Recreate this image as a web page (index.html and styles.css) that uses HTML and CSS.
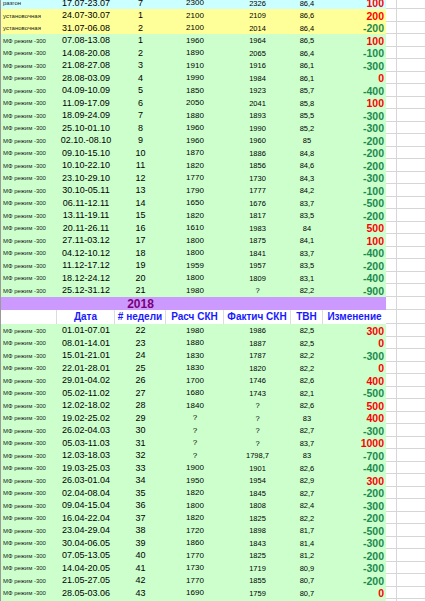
FILE: index.html
```html
<!DOCTYPE html>
<html lang="ru">
<head>
<meta charset="utf-8">
<link rel="stylesheet" href="styles.css">
</head>
<body>
<div class="sheet">
  <div class="row cyan"><div class="c lab">разгон</div><div class="c date">17.07-23.07</div><div class="c wk">7</div><div class="c calc">2300</div><div class="c fact">2326</div><div class="c tvn">86,4</div><div class="c chg up">100</div><div class="x"></div><div class="x last"></div></div>
  <div class="row yellow"><div class="c lab">установочная</div><div class="c date">24.07-30.07</div><div class="c wk">1</div><div class="c calc">2100</div><div class="c fact">2109</div><div class="c tvn">86,6</div><div class="c chg up">200</div><div class="x"></div><div class="x last"></div></div>
  <div class="row yellow"><div class="c lab">установочная</div><div class="c date">31.07-06.08</div><div class="c wk">2</div><div class="c calc">2100</div><div class="c fact">2014</div><div class="c tvn">86,4</div><div class="c chg dn">-200</div><div class="x"></div><div class="x last"></div></div>
  <div class="row green"><div class="c lab">МФ режим -300</div><div class="c date">07.08-13.08</div><div class="c wk">1</div><div class="c calc">1960</div><div class="c fact">1964</div><div class="c tvn">86,5</div><div class="c chg up">100</div><div class="x"></div><div class="x last"></div></div>
  <div class="row green"><div class="c lab">МФ режим -300</div><div class="c date">14.08-20.08</div><div class="c wk">2</div><div class="c calc">1890</div><div class="c fact">2065</div><div class="c tvn">86,4</div><div class="c chg dn">-100</div><div class="x"></div><div class="x last"></div></div>
  <div class="row green"><div class="c lab">МФ режим -300</div><div class="c date">21.08-27.08</div><div class="c wk">3</div><div class="c calc">1910</div><div class="c fact">1916</div><div class="c tvn">86,1</div><div class="c chg dn">-300</div><div class="x"></div><div class="x last"></div></div>
  <div class="row green"><div class="c lab">МФ режим -300</div><div class="c date">28.08-03.09</div><div class="c wk">4</div><div class="c calc">1990</div><div class="c fact">1984</div><div class="c tvn">86,1</div><div class="c chg up">0</div><div class="x"></div><div class="x last"></div></div>
  <div class="row green"><div class="c lab">МФ режим -300</div><div class="c date">04.09-10.09</div><div class="c wk">5</div><div class="c calc">1850</div><div class="c fact">1923</div><div class="c tvn">85,7</div><div class="c chg dn">-400</div><div class="x"></div><div class="x last"></div></div>
  <div class="row green"><div class="c lab">МФ режим -300</div><div class="c date">11.09-17.09</div><div class="c wk">6</div><div class="c calc">2050</div><div class="c fact">2041</div><div class="c tvn">85,8</div><div class="c chg up">100</div><div class="x"></div><div class="x last"></div></div>
  <div class="row green"><div class="c lab">МФ режим -300</div><div class="c date">18.09-24.09</div><div class="c wk">7</div><div class="c calc">1880</div><div class="c fact">1893</div><div class="c tvn">85,5</div><div class="c chg dn">-300</div><div class="x"></div><div class="x last"></div></div>
  <div class="row green"><div class="c lab">МФ режим -300</div><div class="c date">25.10-01.10</div><div class="c wk">8</div><div class="c calc">1960</div><div class="c fact">1990</div><div class="c tvn">85,2</div><div class="c chg dn">-300</div><div class="x"></div><div class="x last"></div></div>
  <div class="row green"><div class="c lab">МФ режим -300</div><div class="c date">02.10.-08.10</div><div class="c wk">9</div><div class="c calc">1960</div><div class="c fact">1960</div><div class="c tvn">85</div><div class="c chg dn">-200</div><div class="x"></div><div class="x last"></div></div>
  <div class="row green"><div class="c lab">МФ режим -300</div><div class="c date">09.10-15.10</div><div class="c wk">10</div><div class="c calc">1870</div><div class="c fact">1886</div><div class="c tvn">84,8</div><div class="c chg dn">-200</div><div class="x"></div><div class="x last"></div></div>
  <div class="row green"><div class="c lab">МФ режим -300</div><div class="c date">10.10-22.10</div><div class="c wk">11</div><div class="c calc">1820</div><div class="c fact">1856</div><div class="c tvn">84,6</div><div class="c chg dn">-200</div><div class="x"></div><div class="x last"></div></div>
  <div class="row green"><div class="c lab">МФ режим -300</div><div class="c date">23.10-29.10</div><div class="c wk">12</div><div class="c calc">1770</div><div class="c fact">1730</div><div class="c tvn">84,3</div><div class="c chg dn">-300</div><div class="x"></div><div class="x last"></div></div>
  <div class="row green"><div class="c lab">МФ режим -300</div><div class="c date">30.10-05.11</div><div class="c wk">13</div><div class="c calc">1790</div><div class="c fact">1777</div><div class="c tvn">84,2</div><div class="c chg dn">-100</div><div class="x"></div><div class="x last"></div></div>
  <div class="row green"><div class="c lab">МФ режим -300</div><div class="c date">06.11-12.11</div><div class="c wk">14</div><div class="c calc">1650</div><div class="c fact">1676</div><div class="c tvn">83,7</div><div class="c chg dn">-500</div><div class="x"></div><div class="x last"></div></div>
  <div class="row green"><div class="c lab">МФ режим -300</div><div class="c date">13.11-19.11</div><div class="c wk">15</div><div class="c calc">1820</div><div class="c fact">1817</div><div class="c tvn">83,5</div><div class="c chg dn">-200</div><div class="x"></div><div class="x last"></div></div>
  <div class="row green"><div class="c lab">МФ режим -300</div><div class="c date">20.11-26.11</div><div class="c wk">16</div><div class="c calc">1610</div><div class="c fact">1983</div><div class="c tvn">84</div><div class="c chg up">500</div><div class="x"></div><div class="x last"></div></div>
  <div class="row green"><div class="c lab">МФ режим -300</div><div class="c date">27.11-03.12</div><div class="c wk">17</div><div class="c calc">1800</div><div class="c fact">1875</div><div class="c tvn">84,1</div><div class="c chg up">100</div><div class="x"></div><div class="x last"></div></div>
  <div class="row green"><div class="c lab">МФ режим -300</div><div class="c date">04.12-10.12</div><div class="c wk">18</div><div class="c calc">1800</div><div class="c fact">1841</div><div class="c tvn">83,7</div><div class="c chg dn">-400</div><div class="x"></div><div class="x last"></div></div>
  <div class="row green"><div class="c lab">МФ режим -300</div><div class="c date">11.12-17.12</div><div class="c wk">19</div><div class="c calc">1959</div><div class="c fact">1957</div><div class="c tvn">83,5</div><div class="c chg dn">-200</div><div class="x"></div><div class="x last"></div></div>
  <div class="row green"><div class="c lab">МФ режим -300</div><div class="c date">18.12-24.12</div><div class="c wk">20</div><div class="c calc">1800</div><div class="c fact">1809</div><div class="c tvn">83,1</div><div class="c chg dn">-400</div><div class="x"></div><div class="x last"></div></div>
  <div class="row green"><div class="c lab">МФ режим -300</div><div class="c date">25.12-31.12</div><div class="c wk">21</div><div class="c calc">1980</div><div class="c fact">?</div><div class="c tvn">82,2</div><div class="c chg dn">-900</div><div class="x"></div><div class="x last"></div></div>

  <div class="row year"><div class="c"></div><div class="c"></div><div class="c yr">2018</div><div class="c"></div><div class="c"></div><div class="c"></div><div class="c"></div><div class="x"></div><div class="x last"></div></div>
  <div class="row head"><div class="h"></div><div class="h">Дата</div><div class="h">#&nbsp;недели</div><div class="h">Расч&nbsp;СКН</div><div class="h">Фактич&nbsp;СКН</div><div class="h">ТВН</div><div class="h">Изменение</div><div class="x"></div><div class="x last"></div></div>

  <div class="row green"><div class="c lab">МФ режим -300</div><div class="c date">01.01-07.01</div><div class="c wk">22</div><div class="c calc">1980</div><div class="c fact">1986</div><div class="c tvn">82,5</div><div class="c chg up">300</div><div class="x"></div><div class="x last"></div></div>
  <div class="row green"><div class="c lab">МФ режим -300</div><div class="c date">08.01-14.01</div><div class="c wk">23</div><div class="c calc">1880</div><div class="c fact">1887</div><div class="c tvn">82,5</div><div class="c chg up">0</div><div class="x"></div><div class="x last"></div></div>
  <div class="row green"><div class="c lab">МФ режим -300</div><div class="c date">15.01-21.01</div><div class="c wk">24</div><div class="c calc">1830</div><div class="c fact">1787</div><div class="c tvn">82,2</div><div class="c chg dn">-300</div><div class="x"></div><div class="x last"></div></div>
  <div class="row green"><div class="c lab">МФ режим -300</div><div class="c date">22.01-28.01</div><div class="c wk">25</div><div class="c calc">1830</div><div class="c fact">1820</div><div class="c tvn">82,2</div><div class="c chg up">0</div><div class="x"></div><div class="x last"></div></div>
  <div class="row green"><div class="c lab">МФ режим -300</div><div class="c date">29.01-04.02</div><div class="c wk">26</div><div class="c calc">1700</div><div class="c fact">1746</div><div class="c tvn">82,6</div><div class="c chg up">400</div><div class="x"></div><div class="x last"></div></div>
  <div class="row green"><div class="c lab">МФ режим -300</div><div class="c date">05.02-11.02</div><div class="c wk">27</div><div class="c calc">1680</div><div class="c fact">1743</div><div class="c tvn">82,1</div><div class="c chg dn">-500</div><div class="x"></div><div class="x last"></div></div>
  <div class="row green"><div class="c lab">МФ режим -300</div><div class="c date">12.02-18.02</div><div class="c wk">28</div><div class="c calc">1840</div><div class="c fact">?</div><div class="c tvn">82,6</div><div class="c chg up">500</div><div class="x"></div><div class="x last"></div></div>
  <div class="row green"><div class="c lab">МФ режим -300</div><div class="c date">19.02-25.02</div><div class="c wk">29</div><div class="c calc">?</div><div class="c fact">?</div><div class="c tvn">83</div><div class="c chg up">400</div><div class="x"></div><div class="x last"></div></div>
  <div class="row green"><div class="c lab">МФ режим -300</div><div class="c date">26.02-04.03</div><div class="c wk">30</div><div class="c calc">?</div><div class="c fact">?</div><div class="c tvn">82,7</div><div class="c chg dn">-300</div><div class="x"></div><div class="x last"></div></div>
  <div class="row green"><div class="c lab">МФ режим -300</div><div class="c date">05.03-11.03</div><div class="c wk">31</div><div class="c calc">?</div><div class="c fact">?</div><div class="c tvn">83,7</div><div class="c chg up">1000</div><div class="x"></div><div class="x last"></div></div>
  <div class="row green"><div class="c lab">МФ режим -300</div><div class="c date">12.03-18.03</div><div class="c wk">32</div><div class="c calc">?</div><div class="c fact">1798,7</div><div class="c tvn">83</div><div class="c chg dn">-700</div><div class="x"></div><div class="x last"></div></div>
  <div class="row green"><div class="c lab">МФ режим -300</div><div class="c date">19.03-25.03</div><div class="c wk">33</div><div class="c calc">1900</div><div class="c fact">1901</div><div class="c tvn">82,6</div><div class="c chg dn">-400</div><div class="x"></div><div class="x last"></div></div>
  <div class="row green"><div class="c lab">МФ режим -300</div><div class="c date">26.03-01.04</div><div class="c wk">34</div><div class="c calc">1950</div><div class="c fact">1954</div><div class="c tvn">82,9</div><div class="c chg up">300</div><div class="x"></div><div class="x last"></div></div>
  <div class="row green"><div class="c lab">МФ режим -300</div><div class="c date">02.04-08.04</div><div class="c wk">35</div><div class="c calc">1820</div><div class="c fact">1845</div><div class="c tvn">82,7</div><div class="c chg dn">-200</div><div class="x"></div><div class="x last"></div></div>
  <div class="row green"><div class="c lab">МФ режим -300</div><div class="c date">09.04-15.04</div><div class="c wk">36</div><div class="c calc">1800</div><div class="c fact">1808</div><div class="c tvn">82,4</div><div class="c chg dn">-300</div><div class="x"></div><div class="x last"></div></div>
  <div class="row green"><div class="c lab">МФ режим -300</div><div class="c date">16.04-22.04</div><div class="c wk">37</div><div class="c calc">1820</div><div class="c fact">1825</div><div class="c tvn">82,2</div><div class="c chg dn">-200</div><div class="x"></div><div class="x last"></div></div>
  <div class="row green"><div class="c lab">МФ режим -300</div><div class="c date">23.04-29.04</div><div class="c wk">38</div><div class="c calc">1720</div><div class="c fact">1898</div><div class="c tvn">81,7</div><div class="c chg dn">-500</div><div class="x"></div><div class="x last"></div></div>
  <div class="row green"><div class="c lab">МФ режим -300</div><div class="c date">30.04-06.05</div><div class="c wk">39</div><div class="c calc">1860</div><div class="c fact">1843</div><div class="c tvn">81,4</div><div class="c chg dn">-300</div><div class="x"></div><div class="x last"></div></div>
  <div class="row green"><div class="c lab">МФ режим -300</div><div class="c date">07.05-13.05</div><div class="c wk">40</div><div class="c calc">1770</div><div class="c fact">1825</div><div class="c tvn">81,2</div><div class="c chg dn">-200</div><div class="x"></div><div class="x last"></div></div>
  <div class="row green"><div class="c lab">МФ режим -300</div><div class="c date">14.04-20.05</div><div class="c wk">41</div><div class="c calc">1730</div><div class="c fact">1719</div><div class="c tvn">80,9</div><div class="c chg dn">-300</div><div class="x"></div><div class="x last"></div></div>
  <div class="row green"><div class="c lab">МФ режим -300</div><div class="c date">21.05-27.05</div><div class="c wk">42</div><div class="c calc">1770</div><div class="c fact">1855</div><div class="c tvn">80,7</div><div class="c chg dn">-200</div><div class="x"></div><div class="x last"></div></div>
  <div class="row green"><div class="c lab">МФ режим -300</div><div class="c date">28.05-03.06</div><div class="c wk">43</div><div class="c calc">1690</div><div class="c fact">1759</div><div class="c tvn">80,7</div><div class="c chg up">0</div><div class="x"></div><div class="x last"></div></div>
  <div class="row green"><div class="c lab">МФ режим -300</div><div class="c date"></div><div class="c wk"></div><div class="c calc"></div><div class="c fact"></div><div class="c tvn"></div><div class="c chg"></div><div class="x"></div><div class="x last"></div></div>
</div>
</body>
</html>
```

FILE: styles.css
```css
html, body {
  margin: 0;
  padding: 0;
  background: #ffffff;
  overflow: hidden;
}

.sheet {
  margin-top: -3.5px;
  font-family: "Liberation Sans", Arial, sans-serif;
  color: #000;
  border-left: 1px solid #9a9a9a;
}

.row {
  display: grid;
  grid-template-columns: 56px 58px 51px 58px 67px 32px 63px 10px 29px;
  height: 12.5px;
}

.c {
  display: flex;
  align-items: center;
  justify-content: center;
  white-space: nowrap;
  overflow: visible;
  line-height: 1;
  padding-top: 1px;
  box-sizing: border-box;
}

.x {
  border-bottom: 1px solid #d6d6d6;
  box-sizing: border-box;
}
.x.last {
  border-left: 1px solid #d6d6d6;
}

.cyan .c { background: #ccffff; }
.yellow .c { background: #ffff99; }
.green .c { background: #ccffcc; }
.year .c { background: #cc99ff; }

.lab {
  justify-content: flex-start;
  padding-left: 2px;
  font-size: 6px;
  color: #1a1a1a;
}

.date {
  font-size: 9px;
}

.wk {
  font-size: 9px;
}

.calc {
  font-size: 8px;
}

.fact {
  font-size: 7.5px;
}

.tvn {
  font-size: 7.5px;
}

.chg {
  justify-content: flex-end;
  padding-right: 2px;
  font-size: 10.5px;
  font-weight: bold;
}
.chg.up { color: #ff0000; }
.chg.dn { color: #1d8a4f; }

.row.year {
  height: 13px;
}
.yr {
  font-size: 12px;
  font-weight: bold;
  color: #7a007a;
}

.row.head {
  height: 14.5px;
}
.h {
  display: flex;
  align-items: center;
  justify-content: center;
  white-space: nowrap;
  background: #ffffff;
  border-right: 1px solid #dcdcdc;
  box-sizing: border-box;
  font-size: 10px;
  font-weight: bold;
  color: #1a1aff;
  line-height: 1;
}
.row.head .h:nth-child(7) {
  border-right: none;
}
```
